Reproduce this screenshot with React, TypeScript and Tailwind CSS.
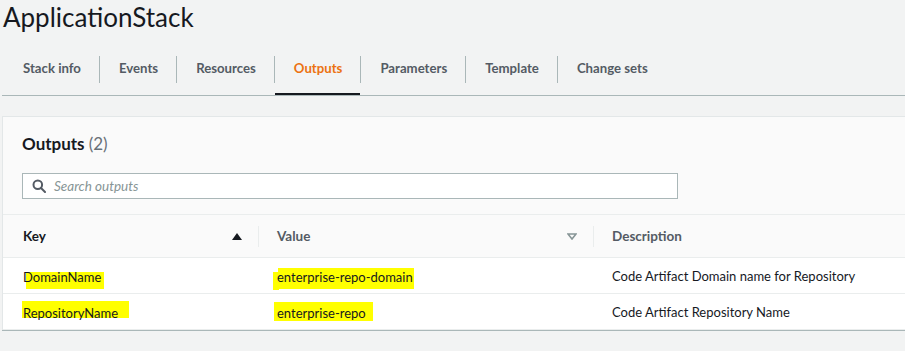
import React from "react";

type Row = {
    key: string;
    value: string;
    description: string;
};

const tabs = ["Stack info", "Events", "Resources", "Outputs", "Parameters", "Template", "Change sets"];

const rows: Row[] = [
    {
        key: "DomainName",
        value: "enterprise-repo-domain",
        description: "Code Artifact Domain name for Repository"
    },
    {
        key: "RepositoryName",
        value: "enterprise-repo",
        description: "Code Artifact Repository Name"
    }
];

function SearchIcon() {
    return (
        <svg width="14" height="14" viewBox="0 0 14 14" fill="none" stroke="#545b64" strokeWidth="2">
            <circle cx="5.8" cy="5.8" r="4.3" />
            <path d="M9 9l4 4" strokeLinecap="round" />
        </svg>
    );
}

export default function App() {
    return (
        <div className="h-[351px] w-full overflow-hidden bg-[#f2f3f3] font-[Lato,sans-serif] text-[#16191f]">
            <h1 className="mt-[2px] pl-[3px] text-[26px] leading-[1.2] font-normal">ApplicationStack</h1>

            {/* tabs */}
            <div className="mt-[10px] ml-[2px] flex border-b border-[#aab7b8] pl-[2px]">
                {tabs.map((tab, index) => (
                    <React.Fragment key={tab}>
                        {index > 0 && <div className="mt-[13px] h-[27px] w-px bg-[#aab7b8]" />}
                        <div
                            className={
                                tab === "Outputs"
                                    ? "flex h-[52px] items-center border-b-2 border-[#16191f] pr-[18px] pl-[19px] text-[13.2px] font-bold text-[#ec7211]"
                                    : "flex h-[52px] items-center border-b-2 border-transparent pr-[18px] pl-[19px] text-[13.2px] font-bold text-[#545b64]"
                            }
                        >
                            <span className="mt-[2px]">{tab}</span>
                        </div>
                    </React.Fragment>
                ))}
            </div>

            {/* outputs panel */}
            <div className="mt-[20px] ml-[2px] border-t border-l border-[#e3e7e8] bg-[#fafafa] shadow-[0_1px_0_0_#aab7b8]">
                <div className="border-b border-[#eaeded] pt-[15px] pr-[20px] pb-[15px] pl-[19px]">
                    <h2 className="text-[17px] leading-[24px] font-bold">
                        Outputs <span className="font-normal text-[#687078]">(2)</span>
                    </h2>
                    <div className="mt-[17px] flex h-[26px] w-[656px] items-center border border-[#aab7b8] bg-white pl-[9px]">
                        <SearchIcon />
                        <span className="ml-[8px] text-[13.5px] text-[#879596] italic">Search outputs</span>
                    </div>
                </div>

                <div className="grid grid-cols-[255px_335px_1fr]">
                    {/* header */}
                    <div className="flex h-[43px] items-center justify-between border-b border-[#eaeded] pr-[16px] pl-[20px]">
                        <span className="text-[13.5px] font-bold text-[#16191f]">Key</span>
                        <svg width="10" height="7" viewBox="0 0 10 7">
                            <path d="M0 7L5 0l5 7z" fill="#16191f" />
                        </svg>
                    </div>
                    <div className="flex h-[43px] items-center border-b border-[#eaeded]">
                        <div className="h-[21px] w-px bg-[#eaeded]" />
                        <div className="flex flex-1 items-center justify-between pr-[16px] pl-[18px]">
                            <span className="text-[13.5px] font-bold text-[#545b64]">Value</span>
                            <svg width="10" height="7" viewBox="0 0 10 7">
                                <path d="M1 1h8L5 6z" fill="none" stroke="#879596" strokeWidth="1.6" />
                            </svg>
                        </div>
                    </div>
                    <div className="flex h-[43px] items-center border-b border-[#eaeded]">
                        <div className="h-[21px] w-px bg-[#eaeded]" />
                        <span className="pl-[18px] text-[13.5px] font-bold text-[#545b64]">Description</span>
                    </div>

                    {/* rows */}
                    {rows.map((row, index) => (
                        <React.Fragment key={row.key}>
                            <div className="flex h-[36px] items-center border-b border-[#eaeded] bg-white pt-[2px] pl-[20px] text-[13px]">
                                <span className="relative inline-block leading-[20px]">
                                    {index === 0 ? (
                                        <span className="absolute top-[5px] left-[3px] h-[17px] w-[78px] bg-[#ffff00]" />
                                    ) : (
                                        <span className="absolute top-[-2px] left-[-1px] h-[17px] w-[107px] bg-[#ffff00]" />
                                    )}
                                    <span className="relative">{row.key}</span>
                                </span>
                            </div>
                            <div className="flex h-[36px] items-center border-b border-[#eaeded] bg-white pt-[2px] pl-[19px] text-[13px]">
                                <span className="relative inline-block leading-[20px]">
                                    {index === 0 ? (
                                        <>
                                            <span className="absolute top-[1px] left-[1px] h-[21px] w-[136px] bg-[#ffff00]" />
                                            <span className="absolute top-[5px] left-[-4px] h-[18px] w-[6px] bg-[#ffff00]" />
                                        </>
                                    ) : (
                                        <span className="absolute top-[-1px] left-[-3px] h-[19px] w-[99px] bg-[#ffff00]" />
                                    )}
                                    <span className="relative">{row.value}</span>
                                </span>
                            </div>
                            <div className="flex h-[36px] items-center border-b border-[#eaeded] bg-white pt-[2px] pl-[19px] text-[13px]">
                                {row.description}
                            </div>
                        </React.Fragment>
                    ))}
                </div>
            </div>
        </div>
    );
}
